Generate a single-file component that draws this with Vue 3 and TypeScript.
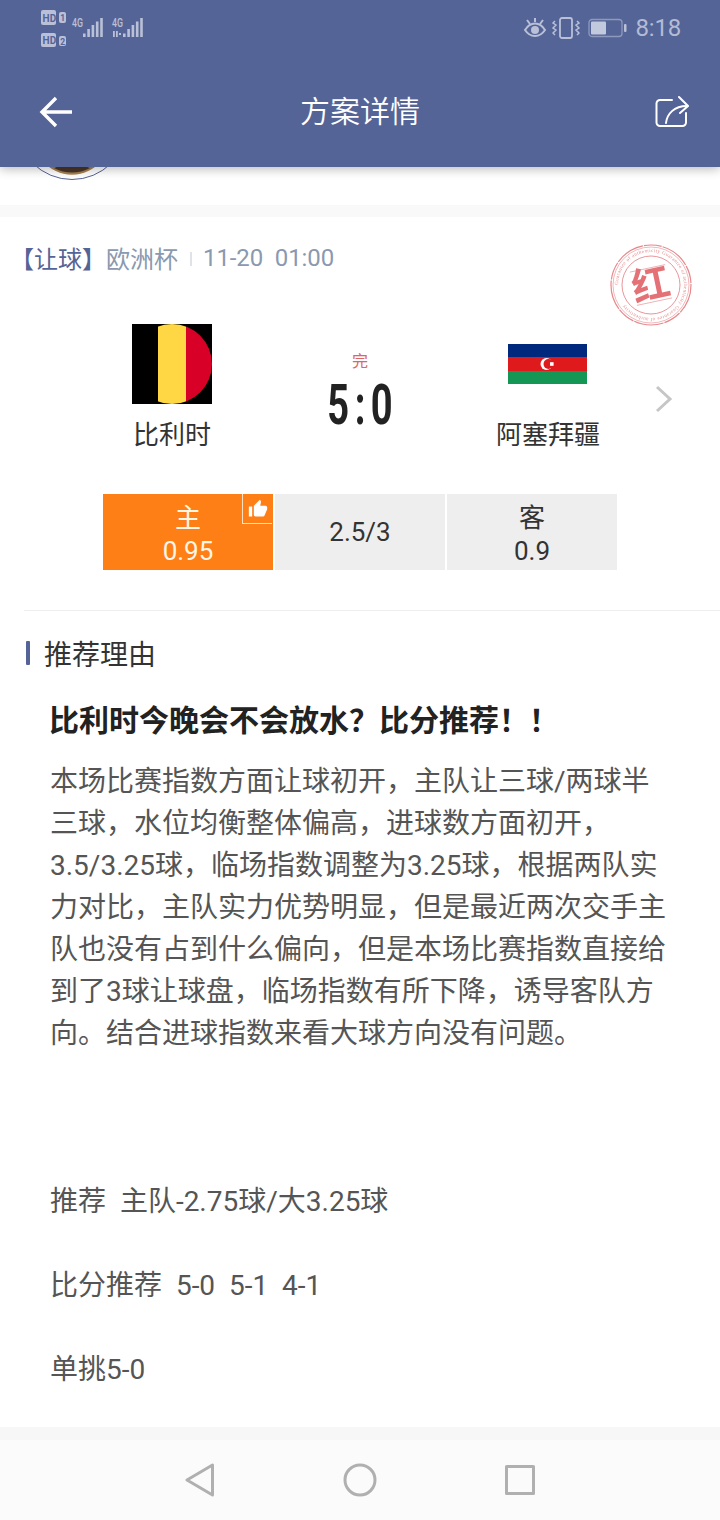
<script setup lang="ts">
const bodyLines: string[] = [
  '本场比赛指数方面让球初开，主队让三球/两球半',
  '三球，水位均衡整体偏高，进球数方面初开，',
  '3.5/3.25球，临场指数调整为3.25球，根据两队实',
  '力对比，主队实力优势明显，但是最近两次交手主',
  '队也没有占到什么偏向，但是本场比赛指数直接给',
  '到了3球让球盘，临场指数有所下降，诱导客队方',
  '向。结合进球指数来看大球方向没有问题。',
  '',
  '',
  '',
  '推荐  主队-2.75球/大3.25球',
  '',
  '比分推荐  5-0  5-1  4-1',
  '',
  '单挑5-0',
]
</script>

<template>
  <div class="page">
    <header class="header">
      <div class="status">
        <svg class="status-left" width="110" height="40" viewBox="0 0 110 40">
          <g fill="#b9c0d8">
            <rect x="0" y="0" width="15" height="15" rx="2" />
            <rect x="18" y="2" width="7" height="11" rx="2" />
            <rect x="0" y="23" width="15" height="14" rx="2" />
            <rect x="18" y="26" width="7" height="10" rx="2" />
            <rect x="42" y="23.500" width="2.600" height="3.500" />
            <rect x="46.300" y="19" width="2.600" height="8" />
            <rect x="50.600" y="15" width="2.600" height="12" />
            <rect x="54.900" y="11.500" width="2.600" height="15.500" />
            <rect x="59.200" y="8" width="2.600" height="19" />
            <rect x="82" y="23.500" width="2.600" height="3.500" />
            <rect x="86.300" y="19" width="2.600" height="8" />
            <rect x="90.600" y="15" width="2.600" height="12" />
            <rect x="94.900" y="11.500" width="2.600" height="15.500" />
            <rect x="99.200" y="8" width="2.600" height="19" />
            <rect x="72" y="21" width="1.800" height="6" />
            <rect x="75" y="21" width="1.800" height="6" />
            <rect x="78" y="23" width="2" height="2" />
          </g>
          <g>
            <text x="1.600" y="11.500" class="hd">HD</text>
            <text x="1.600" y="34" class="hd">HD</text>
            <text x="19.200" y="11" class="num">1</text>
            <text x="19.200" y="34.500" class="num">2</text>
            <text x="31" y="17" class="net" textLength="11" lengthAdjust="spacingAndGlyphs">4G</text>
            <text x="71" y="17" class="net" textLength="11" lengthAdjust="spacingAndGlyphs">4G</text>
          </g>
        </svg>
        <div class="status-right">
          <svg class="eye" width="24" height="20" viewBox="0 0 24 20" fill="none" stroke="#b9c0d8">
            <path d="M2 12c3-5 6-6.500 10-6.500s7 1.500 10 6.500c-3 4.500-6 6-10 6s-7-1.500-10-6z" stroke-width="2" />
            <circle cx="12" cy="12" r="4" fill="#b9c0d8" stroke="none" />
            <path d="M4 2l3 4M12 0v4M20 2l-3 4" stroke-width="2" />
          </svg>
          <svg class="phone" width="28" height="22" viewBox="0 0 28 22" fill="none" stroke="#b9c0d8" stroke-width="1.800">
            <rect x="8" y="1" width="12" height="20" rx="2" />
            <path d="M3 4l-2 2 3 2-3 3 3 2-3 3 2 2M25 4l2 2-3 2 3 3-3 2 3 3-2 2" stroke-width="1.500" />
          </svg>
          <svg width="39" height="20" viewBox="0 0 39 20">
            <rect x="1" y="1.500" width="33" height="17" rx="3" fill="none" stroke="#8f99bd" stroke-width="1.300" />
            <rect x="3" y="3.500" width="15" height="13" rx="1" fill="#c2c8de" />
            <rect x="36" y="6" width="2.500" height="8" rx="1" fill="#b9c0d8" />
          </svg>
          <span class="clock">8:18</span>
        </div>
      </div>
      <div class="titlebar">
        <svg width="34" height="34" viewBox="0 0 34 34" fill="none" stroke="#fff" stroke-width="3.400">
          <path d="M33 17H3M17 3L3 17l14 14" />
        </svg>
        <h1 class="title">方案详情</h1>
        <svg width="34" height="34" viewBox="0 0 34 34" fill="none" stroke="#fff" stroke-width="2" stroke-linecap="round">
          <path d="M17 5H5a3.500 3.500 0 0 0-3.500 3.500v19A3.500 3.500 0 0 0 5 31h22.500a3.500 3.500 0 0 0 3.500-3.500V18" />
          <path d="M11 28c1-9 8-17 21-17" />
          <path d="M24 2l9 9-8 7" />
        </svg>
      </div>
    </header>

    <section class="author">
      <svg class="avatar" width="112" height="112" viewBox="0 0 112 112">
        <circle cx="56" cy="56" r="55.500" fill="#fff" stroke="#556496" stroke-width="1" />
        <circle cx="56" cy="66" r="38" fill="#6f5234" />
        <path d="M26 92c10-6 50-6 60 0a38 38 0 0 1-60 0z" fill="#a8834f" />
        <path d="M38 100c10-4 26-4 36 0a38 38 0 0 1-36 0z" fill="#4a3528" />
      </svg>
    </section>
    <div class="strip"></div>

    <main class="content">
      <div class="meta">
        <span class="tag">【让球】</span><span>欧洲杯</span><i class="sep"></i><span class="time">11-20&nbsp;&nbsp;01:00</span>
      </div>

      <svg class="stamp" width="84" height="84" viewBox="0 0 84 84">
        <defs>
          <path id="stampOuter" d="M42 42m-33 0a33 33 0 1 1 66 0a33 33 0 1 1-66 0" />
        </defs>
        <g fill="none" stroke="#e27478">
          <circle cx="42" cy="42" r="40" stroke-width="1.200" stroke-dasharray="30 1 18 1" />
          <circle cx="42" cy="42" r="38" stroke-width=".6" />
          <circle cx="42" cy="42" r="29" stroke-width=".9" />
          <g transform="rotate(-12 42 42)" stroke-width=".6">
            <path d="M24 25h36M24 59h36" />
          </g>
        </g>
        <text class="stamp-ring" fill="#e27478"><textPath href="#stampOuter">Guarantee of authenticity Guarantee of authenticity Guarantee of authenticity</textPath></text>
        <text x="42" y="55" text-anchor="middle" transform="rotate(-12 42 42)" class="stamp-char" fill="#e0595d">红</text>
      </svg>

      <div class="match">
        <div class="team">
          <div class="flag-box">
            <svg width="80" height="80" viewBox="0 0 80 80">
              <rect width="80" height="80" fill="#000" />
              <clipPath id="beClip"><circle cx="40" cy="40" r="40" /></clipPath>
              <g clip-path="url(#beClip)">
                <rect x="26" width="28" height="80" fill="#ffd744" />
                <rect x="54" width="26" height="80" fill="#d80027" />
              </g>
            </svg>
          </div>
          <div class="team-name">比利时</div>
        </div>
        <div class="score-box">
          <div class="state">完</div>
          <div class="score">5:0</div>
        </div>
        <div class="team">
          <div class="flag-box">
            <svg class="flag-az" width="79" height="40" viewBox="0 0 79 40">
              <rect width="79" height="13" fill="#00297d" />
              <rect y="13" width="79" height="14" fill="#de1a1c" />
              <rect y="27" width="79" height="13" fill="#149754" />
              <circle cx="38.500" cy="20" r="6" fill="#fff" />
              <circle cx="40.500" cy="20" r="5" fill="#de1a1c" />
              <rect x="42" y="18.200" width="3.600" height="3.600" fill="#fff" />
            </svg>
          </div>
          <div class="team-name">阿塞拜疆</div>
        </div>
        <svg class="chevron" width="18" height="28" viewBox="0 0 18 28" fill="none" stroke="#c6c6c6" stroke-width="3">
          <path d="M2 2l13 12L2 26" />
        </svg>
      </div>

      <div class="odds">
        <div class="cell stacked picked">
          <span>主</span><span>0.95</span>
          <div class="thumb">
            <svg width="20" height="20" viewBox="0 0 24 24" fill="#fff">
              <path d="M1 21h4V9H1v12zm22-11c0-1.100-.9-2-2-2h-6.310l.95-4.570.03-.32c0-.41-.17-.79-.44-1.060L14.170 1 7.590 7.590C7.220 7.950 7 8.450 7 9v10c0 1.100.9 2 2 2h9c.83 0 1.540-.5 1.840-1.220l3.020-7.050c.09-.23.14-.47.14-.73v-2z" />
            </svg>
          </div>
        </div>
        <div class="cell">2.5/3</div>
        <div class="cell stacked"><span>客</span><span>0.9</span></div>
      </div>

      <div class="divider"></div>

      <div class="section-head"><i class="bar"></i><h2>推荐理由</h2></div>
      <article class="article">
        <h3>比利时今晚会不会放水？比分推荐！！</h3>
        <p v-for="(line, i) in bodyLines" :key="i" class="line">{{ line }}</p>
      </article>
    </main>

    <div class="strip bottom-strip"></div>
    <nav class="navbar">
      <svg width="30" height="34" viewBox="0 0 30 34" fill="none" stroke="#b0b0b0" stroke-width="3" stroke-linejoin="round">
        <path d="M27.500 2v30L2 17z" />
      </svg>
      <svg width="34" height="34" viewBox="0 0 34 34" fill="none" stroke="#b0b0b0" stroke-width="3">
        <circle cx="17" cy="17" r="15" />
      </svg>
      <svg width="30" height="30" viewBox="0 0 30 30" fill="none" stroke="#b0b0b0" stroke-width="3" stroke-linejoin="round">
        <rect x="1.500" y="1.500" width="27" height="27" />
      </svg>
    </nav>
  </div>
</template>

<style scoped>
.page {
  width: 720px;
  height: 1520px;
  display: flex;
  flex-direction: column;
  overflow: hidden;
  background: #fff;
  font-family: Roboto, "Noto Sans CJK SC", sans-serif;
  color: #333;
}
.header {
  height: 167px;
  flex: none;
  background: #556496;
  box-shadow: 0 2px 10px rgba(0, 0, 0, 0.28);
  position: relative;
  z-index: 2;
}
.status {
  height: 56px;
  padding: 10px 39px 0 41px;
  box-sizing: border-box;
  display: flex;
  justify-content: space-between;
  align-items: flex-start;
}
.status-left {
  display: block;
}
.hd {
  font: 700 10px Roboto, sans-serif;
  fill: #556496;
}
.num {
  font: 700 8.500px Roboto, sans-serif;
  fill: #556496;
}
.net {
  font: 500 12px Roboto, sans-serif;
  fill: #b9c0d8;
}
.status-right {
  display: flex;
  align-items: center;
  gap: 9px;
  height: 36px;
}
.eye {
  margin-right: -4px;
}
.phone {
  margin-right: -1px;
}
.clock {
  font-size: 24px;
  color: #b4bbd4;
  letter-spacing: -0.2px;
}
.titlebar {
  height: 111px;
  padding: 0 31px 0 39px;
  display: flex;
  align-items: flex-start;
  justify-content: space-between;
}
.titlebar svg {
  margin-top: 39px;
}
.title {
  margin: 36px 8px 0 0;
  font-size: 30px;
  font-weight: 350;
  line-height: 40px;
  color: #fff;
}
.author {
  height: 38px;
  flex: none;
  overflow: hidden;
  padding-left: 16px;
}
.avatar {
  display: block;
  margin-top: -99px;
}
.strip {
  height: 12px;
  flex: none;
  background: #f9f9f9;
}
.content {
  flex: 1;
  position: relative;
  min-height: 0;
}
.meta {
  height: 34px;
  margin-top: 23px;
  padding-left: 10px;
  display: flex;
  align-items: center;
  font-size: 24px;
  color: #8a99b0;
}
.tag {
  color: #556496;
}
.time {
  letter-spacing: -0.1px;
  margin-top: 1px;
}
.sep {
  width: 2px;
  height: 14px;
  margin: 3px 11px 0 12px;
  background: #dfe3e8;
}
.stamp {
  position: absolute;
  left: 609px;
  top: 26px;
  filter: blur(0.5px);
  opacity: 0.85;
}
.stamp-ring {
  font: 5px "Liberation Serif", serif;
  letter-spacing: 0.4px;
}
.stamp-char {
  font: 700 38px "Noto Sans CJK SC", sans-serif;
}
.match {
  margin-top: 50px;
  height: 140px;
  display: flex;
  position: relative;
}
.team {
  width: 200px;
  display: flex;
  flex-direction: column;
  align-items: center;
}
.team:first-child {
  margin-left: 72px;
}
.flag-box {
  height: 80px;
  display: flex;
  align-items: center;
  justify-content: center;
}
.flag-box svg {
  display: block;
}
.flag-az {
  margin-right: 1px;
}
.team-name {
  margin-top: 11px;
  font-size: 26px;
  line-height: 40px;
  color: #333;
}
.score-box {
  width: 176px;
  text-align: center;
}
.state {
  margin-top: 26px;
  font-size: 16px;
  line-height: 24px;
  color: #dc6662;
}
.score {
  font-family: Roboto, sans-serif;
  font-weight: 700;
  font-size: 56px;
  line-height: 50px;
  letter-spacing: 8px;
  padding-left: 8px;
  color: #222;
  margin-top: 6px;
  transform: scaleX(0.68);
}
.chevron {
  position: absolute;
  left: 655px;
  top: 61px;
}
.odds {
  margin: 30px 0 0 103px;
  display: flex;
  gap: 2px;
  height: 76px;
}
.cell {
  width: 170px;
  box-sizing: border-box;
  background: #eee;
  font-size: 26px;
  line-height: 33px;
  color: #333;
  display: flex;
  flex-direction: column;
  align-items: center;
  justify-content: center;
}
.stacked {
  padding-top: 6px;
}
.picked {
  background: #ff7f17;
  color: #fff6e5;
  position: relative;
}
.thumb {
  position: absolute;
  top: 0;
  right: 1px;
  width: 30px;
  height: 30px;
  box-sizing: border-box;
  border-left: 1px solid #ffe3c0;
  border-bottom: 1px solid #ffe3c0;
  display: flex;
  align-items: center;
  justify-content: center;
}
.divider {
  height: 1px;
  margin: 40px 0 0 24px;
  background: #eeeeee;
}
.section-head {
  margin: 22px 0 0 26px;
  height: 40px;
  display: flex;
  align-items: center;
}
.bar {
  width: 4px;
  height: 24px;
  background: #556496;
  border-radius: 1px;
}
.section-head h2 {
  margin: 0 0 0 14px;
  font-size: 28px;
  font-weight: 400;
  color: #333;
}
.article {
  padding-left: 49px;
}
.article h3 {
  margin: 26px 0 0;
  font-size: 30px;
  font-weight: 700;
  line-height: 44px;
  color: #222;
}
.line {
  margin: 0 0 0 1px;
  height: 42px;
  font-size: 28px;
  line-height: 42px;
  color: #555;
  white-space: pre;
}
.article .line:first-of-type {
  margin-top: 18px;
}
.bottom-strip {
  height: 13px;
  background: #f7f7f7;
}
.navbar {
  height: 80px;
  flex: none;
  background: #fbfbfb;
  display: flex;
  align-items: center;
}
.navbar svg:nth-child(1) {
  margin-left: 185px;
}
.navbar svg:nth-child(2) {
  margin-left: 128px;
}
.navbar svg:nth-child(3) {
  margin-left: 128px;
}
</style>
